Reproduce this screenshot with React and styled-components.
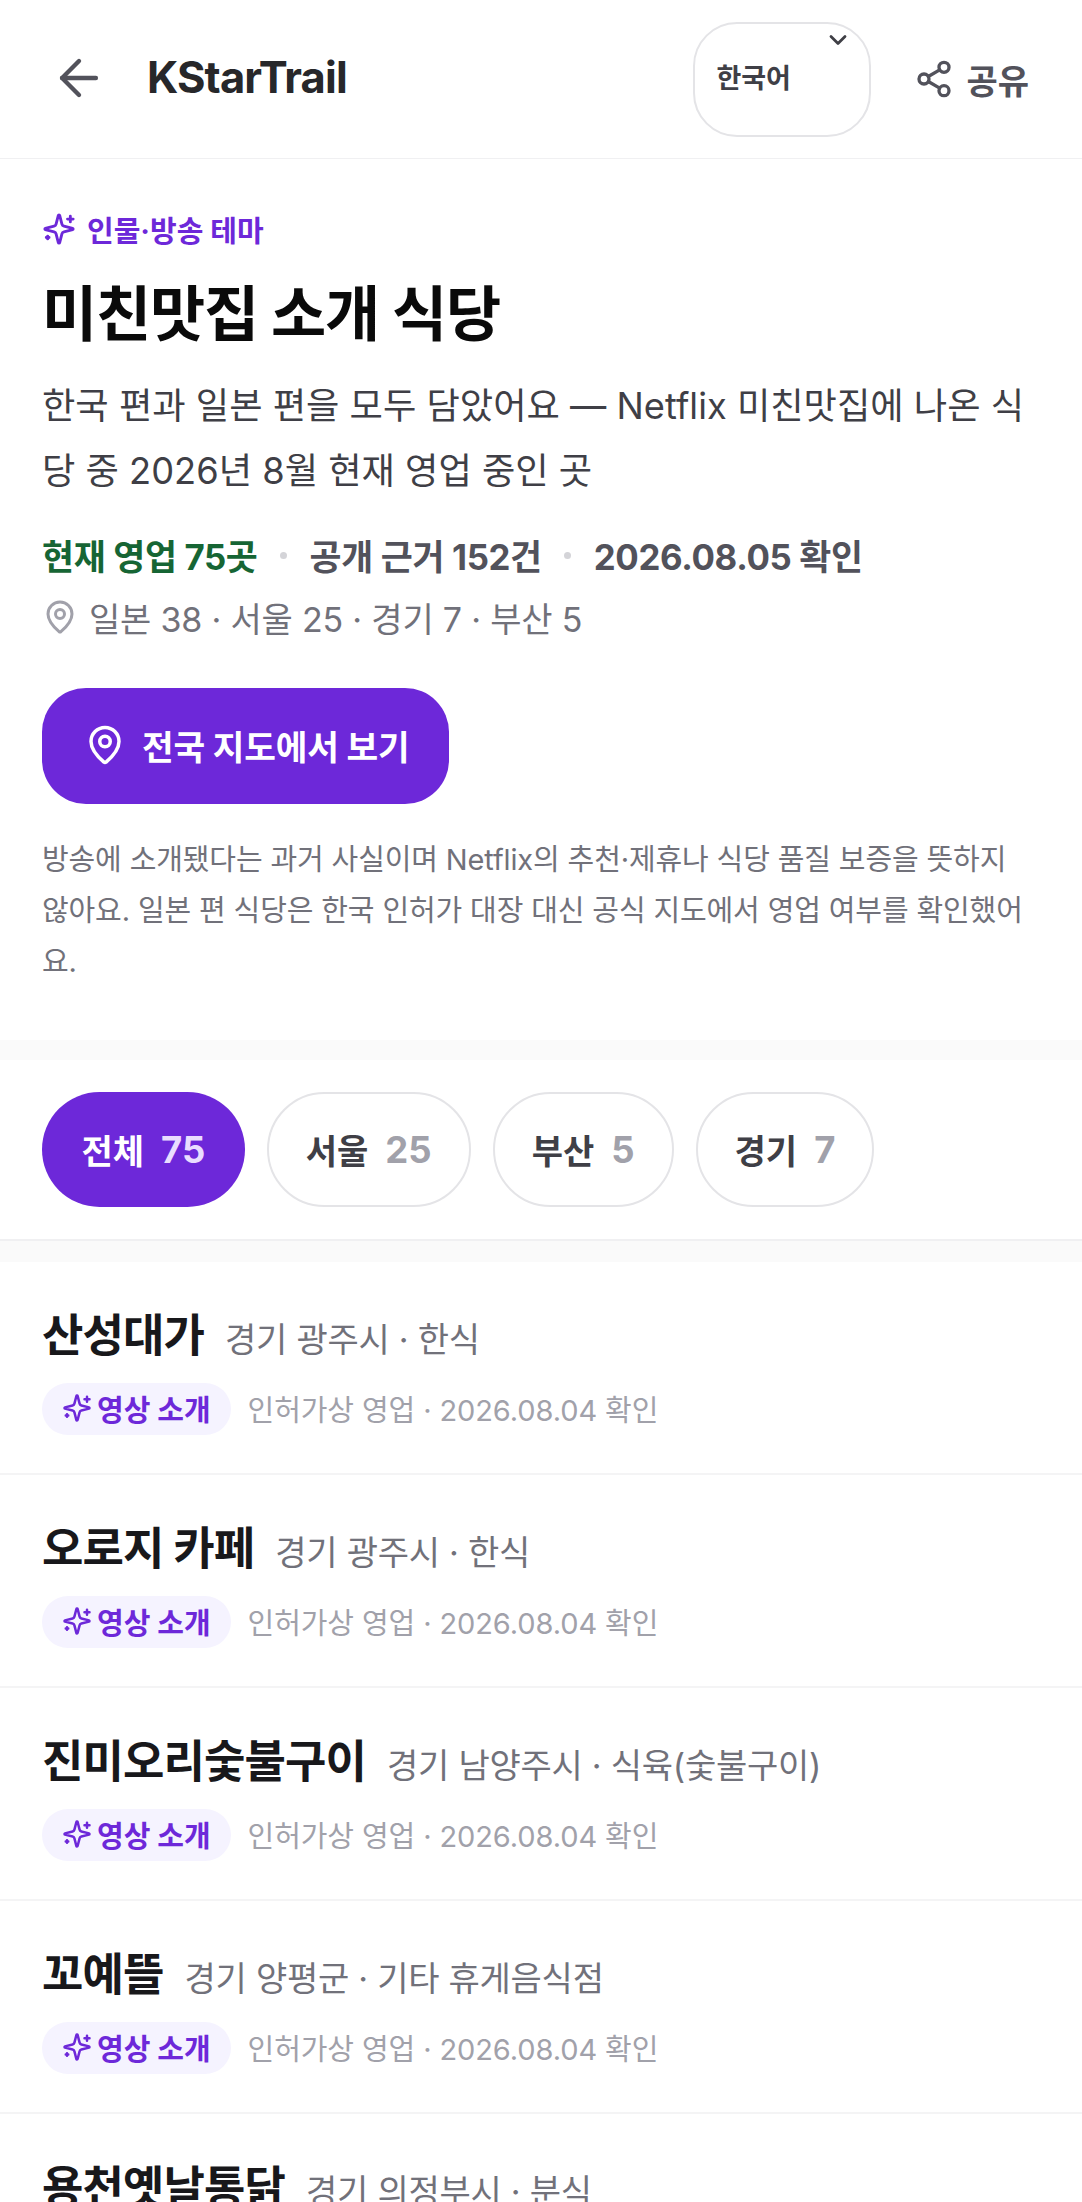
import React from "react";
import styled, { createGlobalStyle } from "styled-components";
import { ArrowLeft, ChevronDown, MapPin, Share2 } from "lucide-react";

const Global = createGlobalStyle`
  html, body { margin: 0; padding: 0; background: #fff; }
  body { font-family: Inter, "Noto Sans CJK KR", sans-serif; }
  #root { height: 2202px; overflow: hidden; }
  * { box-sizing: border-box; }
`;

const Page = styled.div`width: 1082px; color: #18181b;`;
const Header = styled.header`
  height: 159px; display: flex; align-items: center; padding: 0 53px 0 50px;
  border-bottom: 1px solid #f0f0f2;
`;
const BackButton = styled.button`
  border: 0; background: none; padding: 0; width: 58px; height: 58px; display: flex; color: #52525b; margin: -2px 39px 0 0;
`;
const Brand = styled.div`font-size: 43.5px; font-weight: 700; letter-spacing: -0.87px; color: #27272a; flex: 1; padding-bottom: 4px;`;
const LangSelect = styled.div`
  position: relative; width: 178px; height: 115px; border: 2.5px solid #e4e4e7; border-radius: 44px;
  display: flex; align-items: center; padding: 0 0 5px 21px; font-size: 27px; font-weight: 700; color: #3f3f46; margin-right: 43px;
`;
const Chevron = styled.span`position: absolute; top: 2px; right: 17px; color: #3f3f46; display: flex;`;
const Share = styled.div`display: flex; align-items: center; gap: 12px; font-size: 34px; font-weight: 700; color: #52525b;`;

const Hero = styled.section`padding: 48px 42px 0; height: 881px;`;
const Eyebrow = styled.div`display: flex; align-items: center; gap: 11px; font-size: 29px; font-weight: 700; color: #6d28d9; height: 44px;`;
const Title = styled.h1`margin: 25px 0 0; font-size: 60px; line-height: 76px; font-weight: 700; letter-spacing: -1.2px; color: #0a0a0a;`;
const Lead = styled.p`margin: 22px 0 0; font-size: 36.25px; line-height: 64.5px; color: #3f3f46;`;
const Stats = styled.div`display: flex; align-items: center; margin-top: 28px; font-size: 34.8px; letter-spacing: -0.35px; font-weight: 700; color: #52525b; height: 48px;`;
const Live = styled.span`color: #166534;`;
const Dot = styled.span`width: 7px; height: 7px; border-radius: 50%; background: #d4d4d8; margin: 0 22.5px;`;
const Regions = styled.div`display: flex; align-items: center; gap: 11px; margin-top: 13px; font-size: 34px; letter-spacing: -0.2px; color: #71717a; height: 50px;`;
const RegionPin = styled.span`display: flex; color: #a1a1aa;`;
const MapButton = styled.button`
  display: flex; align-items: center; gap: 16px; height: 116px; width: 407px; margin-top: 46px; padding: 0 0 2px 42px; border: 0; border-radius: 44px;
  background: #6d28d9; color: #fff; font: inherit; font-size: 34.4px; letter-spacing: -0.2px; font-weight: 700;
`;
const Note = styled.p`margin: 30px 0 0; max-width: 985px; font-size: 29px; line-height: 51px; color: #71717a; letter-spacing: -0.13px;`;

const Gap = styled.div`height: ${p => p.$height}px; background: #fafafa;`;
const Filters = styled.div`display: flex; gap: 22px; padding: 32px 42px 0; height: 181px; border-bottom: 2px solid #f0f0f2;`;
const Chip = styled.div`
  height: 115px; padding: 0 ${p => p.$active ? "39.5px" : "37px"}; display: flex; align-items: center; gap: 17px; border-radius: 999px;
  border: ${p => p.$active ? "0" : "2.5px solid #e4e4e7"};
  background: ${p => p.$active ? "#6d28d9" : "#fff"};
  color: ${p => p.$active ? "#fff" : "#3f3f46"};
  font-size: 34px; font-weight: 700;
`;
const ChipCount = styled.span`font-size: 36.5px; color: ${p => p.$active ? "#e9ddff" : "#a1a1aa"};`;

const Row = styled.article`height: 213px; padding: 42px 42px 0; border-bottom: 2px solid #f4f4f5;`;
const RowTop = styled.div`display: flex; align-items: baseline; gap: 21px;`;
const Name = styled.h3`margin: 0; font-size: 45px; line-height: 64px; font-weight: 700; letter-spacing: -0.9px; color: #18181b;`;
const Sub = styled.span`font-size: 34px; color: #71717a; letter-spacing: -0.25px;`;
const RowBottom = styled.div`display: flex; align-items: center; gap: 17px; margin-top: 15px;`;
const Badge = styled.span`
  display: flex; align-items: center; gap: 5px; height: 52px; padding: 0 20px 3px; border-radius: 26px; background: #f5f3ff; color: #6d28d9; font-size: 29px; font-weight: 700;
`;
const Meta = styled.span`font-size: 29px; color: #a1a1aa; letter-spacing: -0.1px; padding-bottom: 3px;`;

const Sparkle = ({ size }) => (
  <svg width={size} height={size} viewBox="0 0 24 24" fill="none" stroke="currentColor" strokeWidth="2" strokeLinecap="round" strokeLinejoin="round">
    <path d="M9.937 15.5A2 2 0 0 0 8.5 14.063l-6.135-1.582a.5.5 0 0 1 0-.962L8.5 9.936A2 2 0 0 0 9.937 8.5l1.582-6.135a.5.5 0 0 1 .963 0L14.063 8.5A2 2 0 0 0 15.5 9.937l6.135 1.581a.5.5 0 0 1 0 .964L15.5 14.063a2 2 0 0 0-1.437 1.437l-1.582 6.135a.5.5 0 0 1-.963 0z" />
    <path d="M20 3v4M22 5h-4M4 17v2M5 18H3" />
  </svg>
);

const rows = [
  ["산성대가", "경기 광주시 · 한식"],
  ["오로지 카페", "경기 광주시 · 한식"],
  ["진미오리숯불구이", "경기 남양주시 · 식육(숯불구이)"],
  ["꼬예뜰", "경기 양평군 · 기타 휴게음식점"],
  ["용천옛날통닭", "경기 의정부시 · 분식"],
];
const chips = [["전체", 75], ["서울", 25], ["부산", 5], ["경기", 7]];

export default function App() {
  return (
    <Page>
      <Global />
      <Header>
        <BackButton><ArrowLeft size={58} strokeWidth={1.8} /></BackButton>
        <Brand>KStarTrail</Brand>
        <LangSelect>
          한국어
          <Chevron><ChevronDown size={28} strokeWidth={2.4} /></Chevron>
        </LangSelect>
        <Share><Share2 size={40} strokeWidth={2} />공유</Share>
      </Header>
      <Hero>
        <Eyebrow><Sparkle size={34} />인물·방송 테마</Eyebrow>
        <Title>미친맛집 소개 식당</Title>
        <Lead>한국 편과 일본 편을 모두 담았어요 — Netflix 미친맛집에 나온 식당 중 2026년 8월 현재 영업 중인 곳</Lead>
        <Stats>
          <Live>현재 영업 75곳</Live><Dot />공개 근거 152건<Dot />2026.08.05 확인
        </Stats>
        <Regions><RegionPin><MapPin size={36} strokeWidth={2} /></RegionPin>일본 38 · 서울 25 · 경기 7 · 부산 5</Regions>
        <MapButton><MapPin size={42} strokeWidth={2} />전국 지도에서 보기</MapButton>
        <Note>방송에 소개됐다는 과거 사실이며 Netflix의 추천·제휴나 식당 품질 보증을 뜻하지 않아요. 일본 편 식당은 한국 인허가 대장 대신 공식 지도에서 영업 여부를 확인했어요.</Note>
      </Hero>
      <Gap $height={20} />
      <Filters>
        {chips.map(([label, n], i) => (
          <Chip key={label} $active={i === 0}>{label}<ChipCount $active={i === 0}>{n}</ChipCount></Chip>
        ))}
      </Filters>
      <Gap $height={21} />
      {rows.map(([name, sub]) => (
        <Row key={name}>
          <RowTop><Name>{name}</Name><Sub>{sub}</Sub></RowTop>
          <RowBottom>
            <Badge><Sparkle size={30} />영상 소개</Badge>
            <Meta>인허가상 영업 · 2026.08.04 확인</Meta>
          </RowBottom>
        </Row>
      ))}
    </Page>
  );
}
